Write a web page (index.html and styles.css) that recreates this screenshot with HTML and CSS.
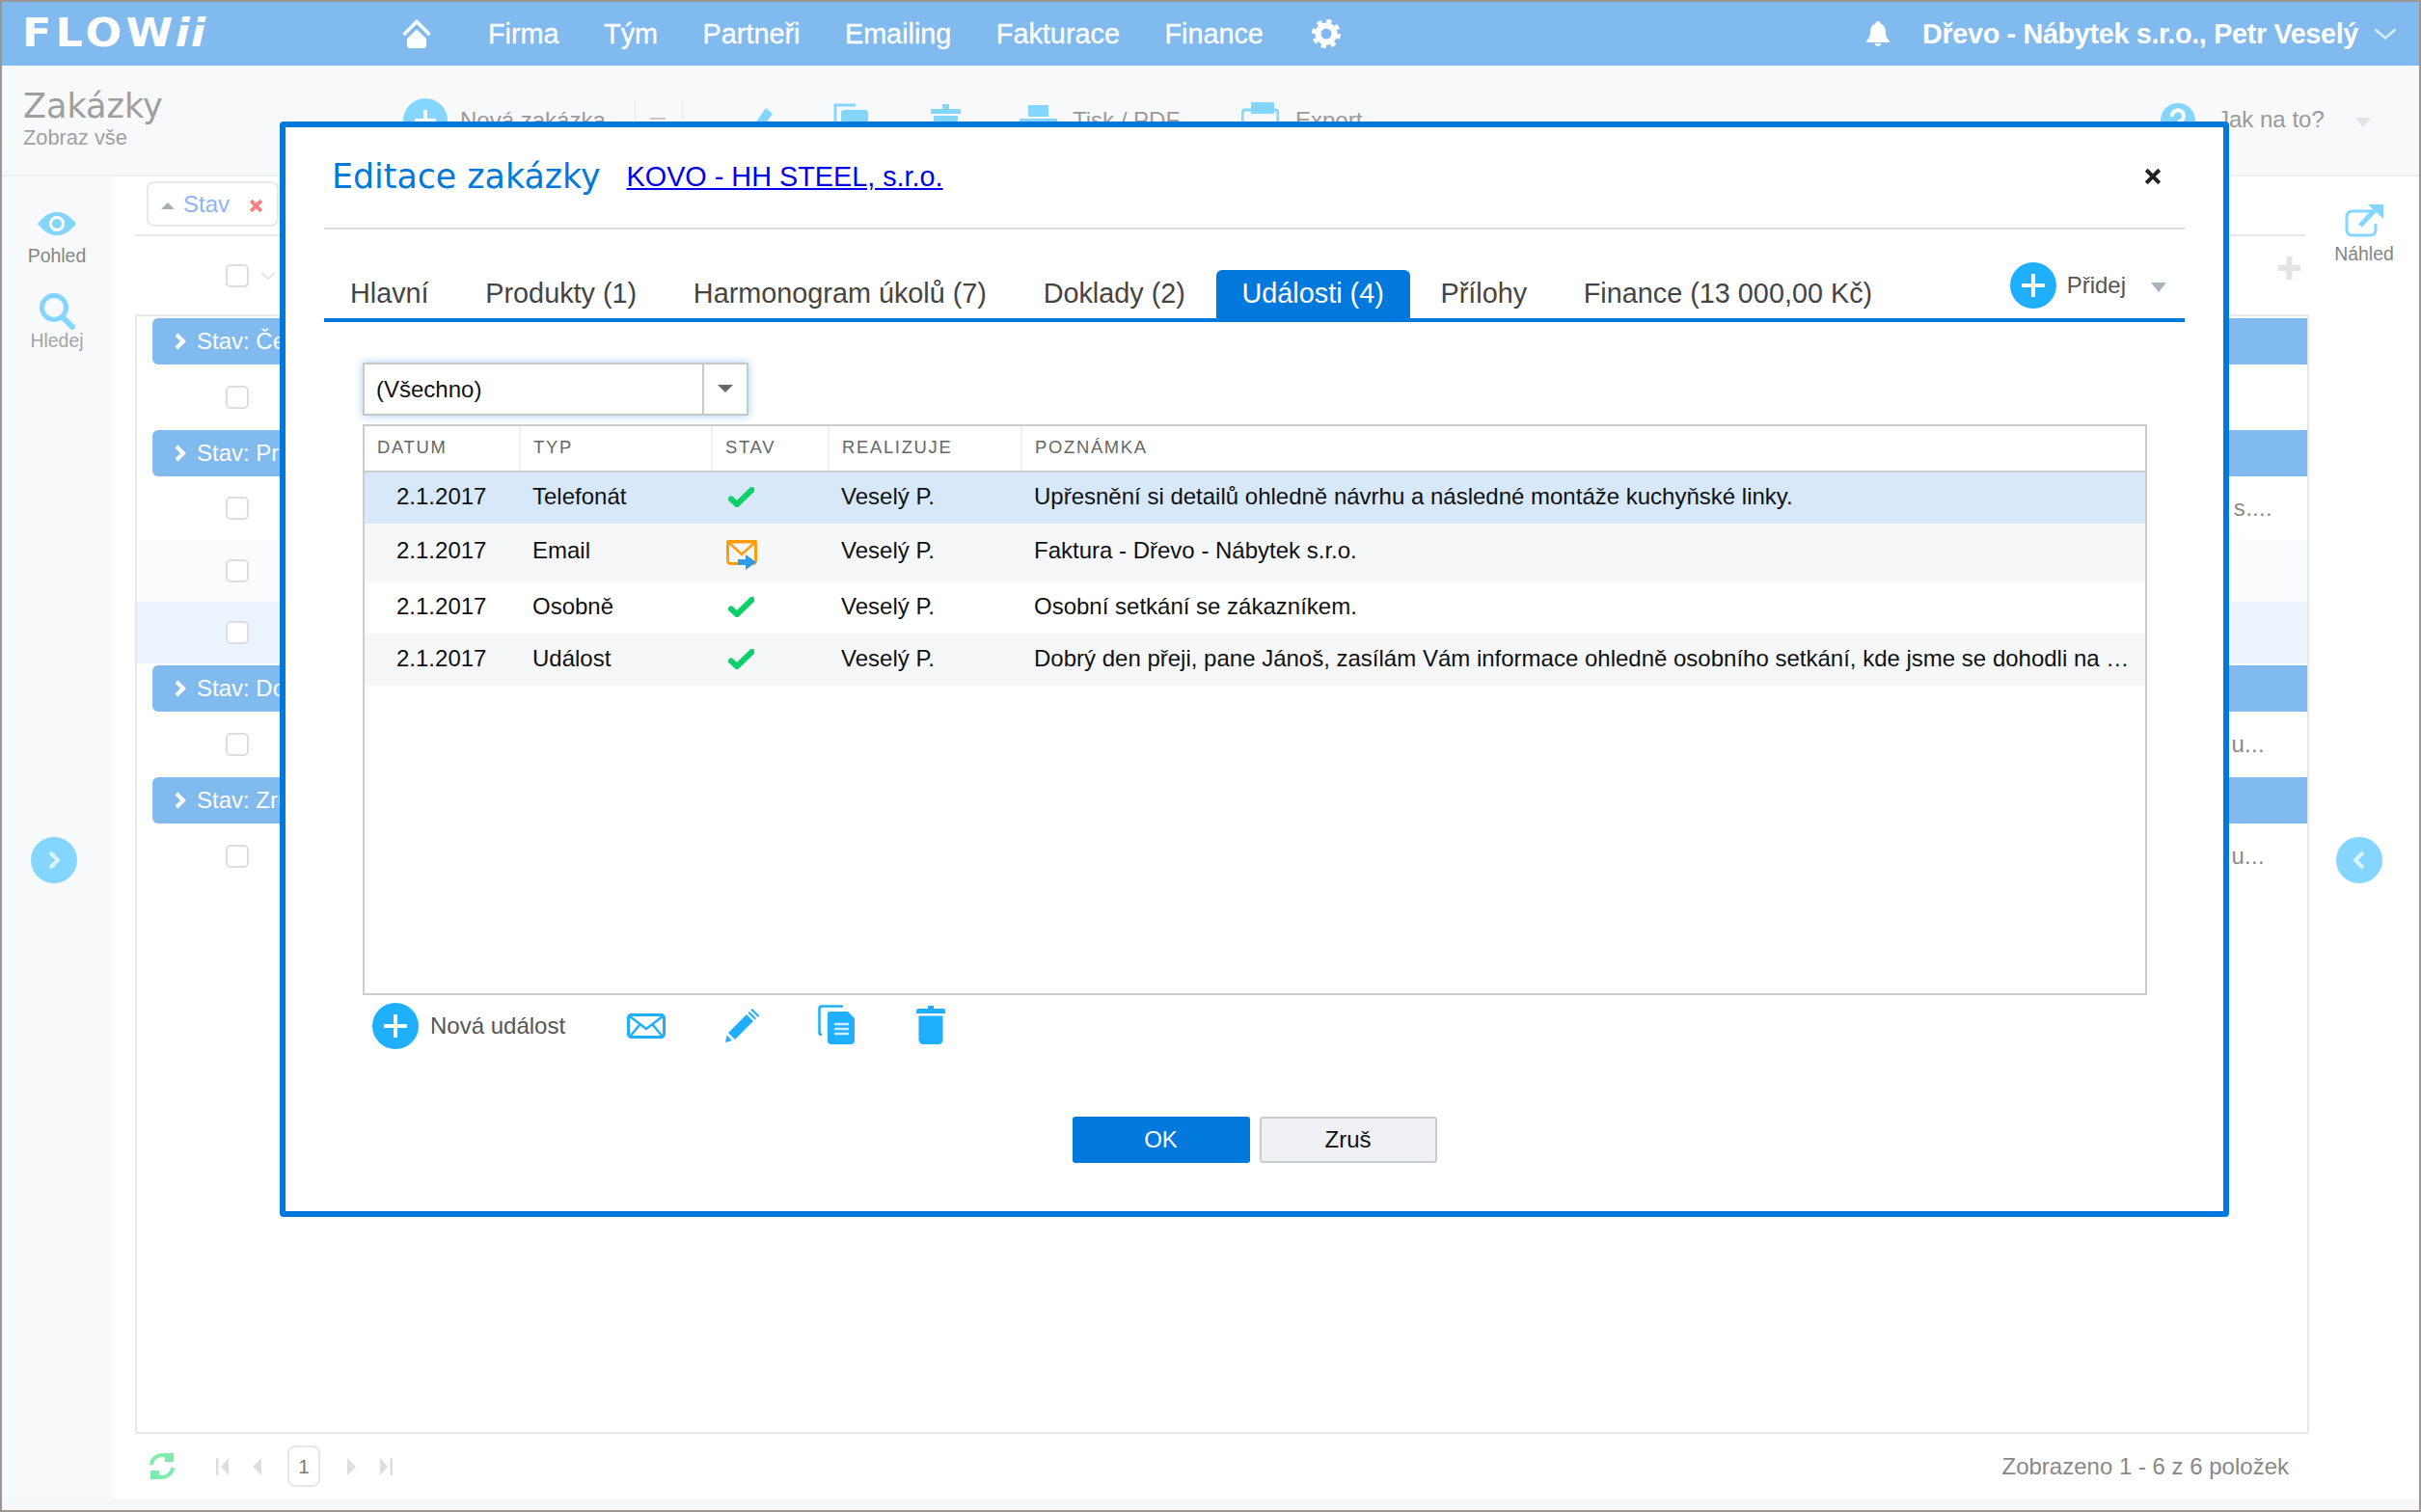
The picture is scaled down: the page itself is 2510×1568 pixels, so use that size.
FILE: index.html
```html
<!DOCTYPE html>
<html lang="cs">
<head>
<meta charset="utf-8">
<title>Zakázky</title>
<link rel="stylesheet" href="styles.css">
</head>
<body>
<div class="app">
  <header class="topbar">
    <div class="logo"><span class="logo-text">FLOW<span class="logo-ii">ii</span></span></div>
    <svg class="home" viewBox="0 0 30 30"><path d="M1.500 16 L15 2.500 L28.500 16" fill="none" stroke="#fff" stroke-width="3.500"/><path d="M15 10.500 L25 20 V27 Q25 30 22 30 H8 Q5 30 5 27 V20 Z" fill="#fff"/></svg>
    <nav class="nav">
      <span>Firma</span><span>Tým</span><span>Partneři</span><span>Emailing</span><span>Fakturace</span><span>Finance</span>
    </nav>
    <svg class="gear" viewBox="0 0 30 30"><circle cx="15" cy="15" r="8.500" fill="none" stroke="#fff" stroke-width="6"/><circle cx="15" cy="15" r="13" fill="none" stroke="#fff" stroke-width="4" stroke-dasharray="5.200 5"/></svg>
    <div class="user">
      <svg class="bell" viewBox="0 0 26 26"><path d="M13 0 a2.500 2.500 0 0 1 2.500 2.600 C20 4 21 8 21 12 c0 4 1.500 6 4 8.500 V22 H1 v-1.500 c2.500-2.500 4-4.500 4-8.500 0-4 1-8 5.500-9.400 A2.500 2.500 0 0 1 13 0 Z M10 23 h6 a3 3 0 0 1-6 0 Z" fill="#fff"/></svg>
      <span class="user-name">Dřevo - Nábytek s.r.o., Petr Veselý</span>
      <svg class="user-chev" viewBox="0 0 24 12"><path d="M1.500 1.500 L12 10.500 L22.500 1.500" fill="none" stroke="#d8ebfb" stroke-width="2.500"/></svg>
    </div>
  </header>

  <section class="subheader">
    <div class="page-title">
      <div class="page-name">Zakázky</div>
      <div class="page-sub">Zobraz vše</div>
    </div>
    <div class="tools">
      <svg class="tool-plus" viewBox="0 0 46 46"><circle cx="23" cy="23" r="23" fill="#84d6ff"/><path d="M23 12 V34 M12 23 H34" stroke="#fff" stroke-width="4"/></svg>
      <span class="tool-text tool-new">Nová zakázka</span>
      <i class="tool-sep sep-a"></i><i class="tool-dash"></i><i class="tool-sep sep-b"></i>
      <svg class="tool-ico ico-pen" viewBox="0 0 28 36"><path d="M20 2 L27 8 L11 30 L3 34 L4 25 Z" fill="#84d6ff"/></svg>
      <svg class="tool-ico ico-copy" viewBox="0 0 38 40"><path d="M3 30 V3 H24" fill="none" stroke="#84d6ff" stroke-width="3"/><rect x="9" y="8" width="28" height="32" rx="3" fill="#84d6ff"/></svg>
      <svg class="tool-ico ico-trash" viewBox="0 0 31 40"><path d="M0 6 H31 V11 H0 Z M12 1 H19 V6 H12 Z M3 13 H28 V40 H3 Z" fill="#84d6ff"/></svg>
      <svg class="tool-ico ico-print" viewBox="0 0 41 40"><path d="M10 2 H31 V14 H10 Z M1 16 H40 V36 H1 Z" fill="#84d6ff"/></svg>
      <span class="tool-text tool-pdf">Tisk / PDF</span>
      <svg class="tool-ico ico-xls" viewBox="0 0 39 40"><rect x="1" y="8" width="37" height="32" rx="3" fill="none" stroke="#84d6ff" stroke-width="3"/><rect x="10" y="0" width="24" height="12" fill="#84d6ff"/></svg>
      <span class="tool-text tool-export">Export</span>
      <svg class="tool-ico ico-help" viewBox="0 0 36 36"><circle cx="18" cy="18" r="18" fill="#84d6ff"/><path d="M12 14 A6 6 0 1 1 20 19 Q18 20 18 23" fill="none" stroke="#fff" stroke-width="4"/></svg>
      <span class="tool-text tool-howto">Jak na to?</span>
      <i class="tool-caret"></i>
    </div>
  </section>

  <div class="workspace">
    <aside class="lside">
      <svg class="eye" viewBox="0 0 40 24"><path d="M0 12 C8 2 14 0 20 0 S32 2 40 12 C32 22 26 24 20 24 S8 22 0 12 Z" fill="#84d6ff"/><circle cx="20" cy="12" r="8" fill="#fff"/><circle cx="20" cy="12" r="5" fill="#84d6ff"/></svg>
      <div class="side-label">Pohled</div>
      <svg class="search" viewBox="0 0 38 38"><circle cx="16" cy="15" r="12.500" fill="none" stroke="#84d6ff" stroke-width="5"/><path d="M25 25 L35 35" stroke="#84d6ff" stroke-width="6" stroke-linecap="round"/></svg>
      <div class="side-label side-label-light">Hledej</div>
      <div class="round-btn round-left"><svg viewBox="0 0 16 24"><path d="M4 4 L12 12 L4 20" fill="none" stroke="#d9f3ff" stroke-width="4"/></svg></div>
    </aside>

    <main class="main">
      <div class="chipbar">
        <div class="chip">
          <i class="chip-tri"></i><span class="chip-text">Stav</span>
          <svg class="chip-x" viewBox="0 0 14 14"><path d="M2 2 L12 12 M12 2 L2 12" stroke="#f98080" stroke-width="3.500"/></svg>
        </div>
      </div>
      <div class="grid-head">
        <i class="check"></i>
        <svg class="head-chev" viewBox="0 0 16 8"><path d="M1 1 L8 7 L15 1" fill="none" stroke="#e4e4e4" stroke-width="2"/></svg>
        <svg class="head-plus" viewBox="0 0 25 26"><path d="M12.500 1 V25 M1 13 H24" stroke="#e4e4e4" stroke-width="6"/></svg>
      </div>
      <div class="grid">
        <div class="group"><svg viewBox="0 0 14 20"><path d="M3 3 L10 10 L3 17" fill="none" stroke="#fff" stroke-width="4"/></svg>Stav: Čeká</div>
        <div class="row row-h68"><i class="check"></i></div>
        <div class="group"><svg viewBox="0 0 14 20"><path d="M3 3 L10 10 L3 17" fill="none" stroke="#fff" stroke-width="4"/></svg>Stav: Probíhá</div>
        <div class="row row-h65"><i class="check"></i><span class="row-note note-a">s....</span></div>
        <div class="row row-h65 row-alt"><i class="check"></i></div>
        <div class="row row-h64 row-sel"><i class="check"></i></div>
        <div class="group group-gap"><svg viewBox="0 0 14 20"><path d="M3 3 L10 10 L3 17" fill="none" stroke="#fff" stroke-width="4"/></svg>Stav: Dokončeno</div>
        <div class="row row-h68"><i class="check"></i><span class="row-note">u...</span></div>
        <div class="group"><svg viewBox="0 0 14 20"><path d="M3 3 L10 10 L3 17" fill="none" stroke="#fff" stroke-width="4"/></svg>Stav: Zrušeno</div>
        <div class="row row-h68"><i class="check"></i><span class="row-note">u...</span></div>
      </div>
      <footer class="pager">
        <svg class="refresh" viewBox="0 0 28 29"><path d="M3 13 A11 11 0 0 1 20 5" fill="none" stroke="#7debab" stroke-width="4"/><path d="M17 1 H26 V10 H17 Z" fill="#7debab"/><path d="M25 16 A11 11 0 0 1 8 24" fill="none" stroke="#7debab" stroke-width="4"/><path d="M2 19 H11 V28 H2 Z" fill="#7debab"/></svg>
        <svg class="pg pg-first" viewBox="0 0 13 18"><path d="M0 0 H2.500 V18 H0 Z M13 0 V18 L5 9 Z" fill="#dedede"/></svg>
        <svg class="pg pg-prev" viewBox="0 0 9 18"><path d="M9 0 V18 L0 9 Z" fill="#dedede"/></svg>
        <div class="pg-box">1</div>
        <svg class="pg pg-next" viewBox="0 0 9 18"><path d="M0 0 V18 L9 9 Z" fill="#dedede"/></svg>
        <svg class="pg pg-last" viewBox="0 0 13 18"><path d="M0 0 V18 L8 9 Z M10.500 0 H13 V18 H10.500 Z" fill="#dedede"/></svg>
        <span class="pg-info">Zobrazeno 1 - 6 z 6 položek</span>
      </footer>
    </main>

    <aside class="rside">
      <svg class="preview" viewBox="0 0 40 35"><path d="M28 8 H8 Q2 8 2 14 V27 Q2 33 8 33 H26 Q32 33 32 27 V21" fill="none" stroke="#84d6ff" stroke-width="3"/><path d="M16 23 L31 7" stroke="#84d6ff" stroke-width="5"/><path d="M24 1 H40 V16 Z" fill="#84d6ff"/></svg>
      <div class="side-label">Náhled</div>
      <div class="round-btn round-right"><svg viewBox="0 0 16 24"><path d="M12 4 L4 12 L12 20" fill="none" stroke="#d9f3ff" stroke-width="4"/></svg></div>
    </aside>
  </div>
  <div class="strip"></div>

  <div class="modal">
    <div class="modal-head">
      <h1 class="modal-title">Editace zakázky</h1>
      <a class="modal-link" href="#">KOVO - HH STEEL, s.r.o.</a>
      <svg class="modal-close" viewBox="0 0 16 16"><path d="M2 2 L14 14 M14 2 L2 14" stroke="#222" stroke-width="3.500"/></svg>
    </div>
    <div class="tabs">
      <span class="tab">Hlavní</span>
      <span class="tab">Produkty (1)</span>
      <span class="tab">Harmonogram úkolů (7)</span>
      <span class="tab">Doklady (2)</span>
      <span class="tab tab-active">Události (4)</span>
      <span class="tab">Přílohy</span>
      <span class="tab">Finance (13 000,00 Kč)</span>
      <div class="add">
        <svg class="plus-btn" viewBox="0 0 48 48"><circle cx="24" cy="24" r="24" fill="#20aeff"/><path d="M24 12 V36 M12 24 H36" stroke="#fff" stroke-width="4"/></svg>
        <span class="add-text">Přidej</span>
        <i class="add-caret"></i>
      </div>
    </div>
    <div class="modal-body">
      <div class="select"><span class="select-text">(Všechno)</span><span class="select-btn"><i></i></span></div>
      <div class="table-wrap">
        <table class="events">
          <colgroup><col class="c1"><col class="c2"><col class="c3"><col class="c4"><col></colgroup>
          <thead><tr><th>Datum</th><th>Typ</th><th>Stav</th><th>Realizuje</th><th>Poznámka</th></tr></thead>
          <tbody>
            <tr class="ev-sel"><td class="ev-date">2.1.2017</td><td>Telefonát</td><td class="ev-stat"><svg class="ok" viewBox="0 0 27 21"><path d="M3 12.500 L9 18 L24.500 3" fill="none" stroke="#0dd069" stroke-width="6" stroke-linecap="round"/></svg></td><td>Veselý P.</td><td class="ev-note">Upřesnění si detailů ohledně návrhu a následné montáže kuchyňské linky.</td></tr>
            <tr class="ev-tall ev-alt"><td class="ev-date">2.1.2017</td><td>Email</td><td class="ev-stat ev-stat-mail"><svg class="mailsend" viewBox="0 0 32 31"><rect x="1.500" y="1.500" width="29" height="23" rx="3" fill="none" stroke="#ff9d0f" stroke-width="3"/><rect x="0" y="0" width="32" height="3.500" rx="2" fill="#ff9d0f"/><path d="M3 3 L16 15 L29 3" fill="none" stroke="#ff9d0f" stroke-width="2.500"/><path d="M12 20 H20 V15 L31 23 L20 31 V26 H12 Z" fill="#2f9be8"/></svg></td><td>Veselý P.</td><td class="ev-note">Faktura - Dřevo - Nábytek s.r.o.</td></tr>
            <tr><td class="ev-date">2.1.2017</td><td>Osobně</td><td class="ev-stat"><svg class="ok" viewBox="0 0 27 21"><path d="M3 12.500 L9 18 L24.500 3" fill="none" stroke="#0dd069" stroke-width="6" stroke-linecap="round"/></svg></td><td>Veselý P.</td><td class="ev-note">Osobní setkání se zákazníkem.</td></tr>
            <tr class="ev-alt"><td class="ev-date">2.1.2017</td><td>Událost</td><td class="ev-stat"><svg class="ok" viewBox="0 0 27 21"><path d="M3 12.500 L9 18 L24.500 3" fill="none" stroke="#0dd069" stroke-width="6" stroke-linecap="round"/></svg></td><td>Veselý P.</td><td class="ev-note">Dobrý den přeji, pane Jánoš, zasílám Vám informace ohledně osobního setkání, kde jsme se dohodli na další spolupráci a termínech.</td></tr>
          </tbody>
        </table>
      </div>
      <div class="ev-tools">
        <svg class="plus-btn" viewBox="0 0 48 48"><circle cx="24" cy="24" r="24" fill="#20aeff"/><path d="M24 12 V36 M12 24 H36" stroke="#fff" stroke-width="4"/></svg>
        <span class="ev-new">Nová událost</span>
        <svg class="et et-mail" viewBox="0 0 40 26"><rect x="1.500" y="1.500" width="37" height="23" rx="3" fill="none" stroke="#20aeff" stroke-width="3"/><path d="M3 3 L20 16 L37 3 M3 24 L13 12 M37 24 L27 12" fill="none" stroke="#20aeff" stroke-width="2.500"/></svg>
        <svg class="et et-pen" viewBox="0 0 37 36"><path d="M27 3 L34 10 L32.500 11.500 L25.500 4.500 Z M24 6 L31 13 L12 32 L5 25 Z" fill="#20aeff"/><path d="M3.500 27.500 L9 33 L2 35 Z" fill="#20aeff"/><path d="M29 0.500 L36.500 8" stroke="#20aeff" stroke-width="2"/></svg>
        <svg class="et et-copy" viewBox="0 0 38 41"><path d="M26 1.500 H4 Q1.500 1.500 1.500 4 V29 Q1.500 31 4 31" fill="none" stroke="#20aeff" stroke-width="2.500"/><path d="M12 7 H31 L38 14 V37 Q38 41 34 41 H14 Q10 41 10 37 V9 Q10 7 12 7 Z" fill="#20aeff"/><path d="M17 20 H32 M17 25 H32 M17 30 H32" stroke="#cdeeff" stroke-width="2.500"/></svg>
        <svg class="et et-trash" viewBox="0 0 30 40"><path d="M12 0 H18 V3 H28 Q30 3 30 5 V8 H0 V5 Q0 3 2 3 H12 Z M2.500 10.500 H27.500 V35 Q27.500 40 22.500 40 H7.500 Q2.500 40 2.500 35 Z" fill="#20aeff"/></svg>
      </div>
      <div class="actions">
        <button class="btn btn-ok">OK</button>
        <button class="btn btn-cancel">Zruš</button>
      </div>
    </div>
  </div>
</div>
</body>
</html>
```

FILE: styles.css
```css
* { box-sizing: border-box; }
html, body { margin: 0; padding: 0; }
body { font-family: "Liberation Sans", Arial, sans-serif; background: #fff; }
i { display: block; }

.app {
  position: relative;
  width: 2510px;
  height: 1568px;
  border: 2px solid #9b9594;
  display: flex;
  flex-direction: column;
  overflow: hidden;
  background: #fff;
}

/* top bar */
.topbar {
  height: 66px;
  flex: none;
  background: #80baee;
  display: flex;
  align-items: center;
  color: #fff;
  font-size: 28.8px;
}
.logo {
  margin-left: 21px;
  margin-top: -3px;
  width: 394px;
  flex: none;
  font-family: "DejaVu Sans", sans-serif;
  font-size: 41px;
  font-weight: 700;
  letter-spacing: 4px;
  color: #fff;
  white-space: nowrap;
}
.logo-text { display: inline-block; transform: scaleX(1.08); transform-origin: left center; }
.logo-ii { font-style: italic; letter-spacing: 1px; margin-left: -2px; }
.home { width: 30px; height: 30px; flex: none; }
.nav { display: flex; gap: 46.500px; margin-left: 59px; -webkit-text-stroke: .3px #fff; }
.gear { width: 30px; height: 30px; margin-left: 50px; flex: none; }
.user { margin-left: auto; display: flex; align-items: center; padding-right: 23px; }
.bell { width: 26px; height: 26px; }
.user-name { font-weight: 700; font-size: 28.8px; margin-left: 33px; letter-spacing: -.35px; }
.user-chev { width: 24px; height: 12px; margin-left: 16px; }

/* sub header */
.subheader {
  height: 115px;
  flex: none;
  background: #f8f9fb;
  border-bottom: 2px solid #eef0f2;
  display: flex;
  color: #a0a0a0;
}
.page-title { width: 416px; flex: none; padding: 21px 0 0 22px; }
.page-name { font-family: "DejaVu Sans", sans-serif; font-size: 35px; line-height: 42px; color: #9e9e9e; }
.page-sub { font-size: 21.800px; line-height: 30px; margin-top: -3px; }
.tools { position: relative; flex: 1; display: flex; align-items: flex-start; padding-top: 34px; }
.tool-plus { width: 46px; height: 46px; flex: none; }
.tool-text { font-size: 24px; color: #9a9a9a; line-height: 28px; }
.tool-new { margin: 9px 0 0 13px; width: 150px; white-space: nowrap; flex: none; }
.tool-sep { width: 1px; height: 30px; background: #e8e8e8; flex: none; }
.sep-a { margin-left: 31px; }
.sep-b { margin-left: 0; }
.tool-dash { width: 16px; height: 2px; background: #c8c8c8; margin: 20px 17px 0 15px; flex: none; }
.tool-ico { flex: none; }
.ico-pen { width: 28px; height: 36px; margin: 8px 0 0 66px; }
.ico-copy { width: 38px; height: 40px; margin: 4px 0 0 61px; }
.ico-trash { width: 31px; height: 40px; margin: 5px 0 0 64px; }
.ico-print { width: 41px; height: 40px; margin: 5px 0 0 60px; }
.tool-pdf { margin: 9px 0 0 15px; width: 112px; white-space: nowrap; flex: none; }
.ico-xls { width: 39px; height: 40px; margin: 4px 0 0 63px; }
.tool-export { margin: 9px 0 0 17px; width: 70px; flex: none; }
.ico-help { width: 36px; height: 36px; margin: 5px 0 0 auto; }
.tool-howto { margin: 8px 0 0 23px; width: 109px; white-space: nowrap; flex: none; }
.tool-caret {
  width: 0; height: 0; flex: none;
  margin: 20px 50px 0 34px;
  border-left: 8px solid transparent;
  border-right: 8px solid transparent;
  border-top: 10px solid #dfe2e6;
}

/* workspace */
.workspace { flex: 1; display: flex; min-height: 0; }
.lside {
  width: 114px;
  flex: none;
  background: #f8f9fb;
  display: flex;
  flex-direction: column;
  align-items: center;
  padding-top: 37px;
}
.eye { width: 40px; height: 24px; display: block; }
.side-label { font-size: 19.400px; line-height: 24px; color: #858585; margin-top: 9px; }
.side-label-light { color: #a5a5a5; margin-top: -1px; }
.search { width: 38px; height: 38px; margin-top: 27px; display: block; }
.round-btn {
  width: 48px; height: 48px;
  border-radius: 50%;
  background: #84d6ff;
  display: flex;
  align-items: center;
  justify-content: center;
}
.round-btn svg { width: 16px; height: 24px; }
.round-left { margin-top: auto; margin-bottom: 638px; margin-right: 6px; }
.round-right { margin-top: auto; margin-bottom: 638px; margin-right: 10px; }

.main { flex: 1; min-width: 0; padding-left: 24px; display: flex; flex-direction: column; }
.chipbar { height: 62px; flex: none; padding: 5px 4px 0 0; margin-right: 4px; border-bottom: 2px solid #e8e8e8; padding-left: 12px; }
.chip {
  width: 137px; height: 47px;
  border: 2px solid #e8e8e8;
  border-radius: 8px;
  display: flex;
  align-items: center;
  padding-left: 13px;
  background: #fff;
}
.chip-tri { width: 0; height: 0; border-left: 7px solid transparent; border-right: 7px solid transparent; border-bottom: 7px solid #a8b0b0; margin-top: 3px; }
.chip-text { font-size: 24px; color: #8db3f0; margin-left: 9px; }
.chip-x { width: 15px; height: 15px; margin-left: 20px; margin-top: 3px; }

.check {
  width: 24px; height: 24px;
  flex: none;
  border: 2px solid #dedede;
  border-radius: 5px;
  background: #fff;
}
.grid-head { height: 81px; flex: none; display: flex; align-items: center; padding-left: 94px; }
.head-chev { width: 16px; height: 8px; margin-left: 12px; }
.head-plus { width: 25px; height: 26px; margin-left: auto; margin-right: 8px; margin-top: -16px; }
.grid { flex: 1; min-height: 0; border: 2px solid #e8e8e8; padding-top: 2px; border-radius: 2px; }
.group {
  height: 48px;
  margin-left: 16px;
  background: #80baee;
  border-radius: 6px 0 0 6px;
  display: flex;
  align-items: center;
  padding-left: 22px;
  color: #fff;
  font-size: 24px;
  font-weight: 400;
}
.group svg { width: 14px; height: 20px; margin-right: 10px; }
.group-gap { margin-top: 2px; }
.row { display: flex; align-items: center; padding-left: 92px; }
.row-h68 { height: 68px; }
.row-h65 { height: 65px; }
.row-h64 { height: 64px; }
.row-alt { background: #fbfcfd; }
.row-sel { background: #ebf3fc; }
.row-note { margin-left: auto; margin-right: 44px; font-size: 24px; color: #8a8a8a; letter-spacing: .3px; }
.note-a { margin-right: 36px; }

.pager { height: 67px; flex: none; display: flex; align-items: center; padding-left: 14px; }
.refresh { width: 28px; height: 29px; }
.pg { height: 18px; flex: none; }
.pg-first { width: 13px; margin-left: 42px; }
.pg-prev { width: 9px; margin-left: 25px; }
.pg-box {
  width: 34px; height: 43px;
  margin-left: 27px;
  border: 2px solid #e6e6e6;
  border-radius: 8px;
  display: flex;
  align-items: center;
  justify-content: center;
  font-size: 20.800px;
  color: #777;
  background: #fff;
}
.pg-next { width: 9px; margin-left: 28px; }
.pg-last { width: 13px; margin-left: 25px; }
.pg-info { margin-left: auto; margin-right: 21px; font-size: 24px; color: #888; }

.rside { width: 114px; flex: none; display: flex; flex-direction: column; align-items: center; padding-top: 28px; background: #fff; }
.preview { width: 40px; height: 35px; display: block; }
.rside .side-label { margin-top: 5px; }

.strip { height: 12px; flex: none; background: #f6f7f9; }

/* modal */
.modal {
  position: absolute;
  left: 288px;
  top: 124px;
  width: 2021px;
  height: 1136px;
  border: 6px solid #0078dc;
  border-radius: 4px;
  background: #fff;
  padding: 0 40px;
}
.modal-head {
  height: 106px;
  border-bottom: 2px solid #dcdcdc;
  display: flex;
  align-items: center;
  padding-left: 8px;
  padding-bottom: 2px;
}
.modal-title { margin: 0; font-family: "DejaVu Sans", sans-serif; font-size: 34.800px; font-weight: 400; color: #0078dc; }
.modal-link { margin-left: 27px; font-size: 28.800px; color: #0000ee; text-decoration: underline; }
.modal-close { width: 18px; height: 18px; margin-left: auto; margin-right: 24px; }
.tabs {
  height: 96px;
  border-bottom: 4px solid #0078dc;
  display: flex;
  align-items: flex-end;
  gap: 4.700px;
}
.tab {
  height: 50px;
  padding: 0 27px;
  display: flex;
  align-items: center;
  padding-bottom: 1px;
  font-size: 28.800px;
  color: #444;
  white-space: nowrap;
}
.tab-active { background: #0078dc; color: #fff; border-radius: 6px 6px 0 0; }
.add { margin-left: auto; display: flex; align-items: center; padding-right: 19px; margin-bottom: 10px; }
.plus-btn { width: 48px; height: 48px; flex: none; display: block; }
.add-text { font-size: 24px; color: #555; margin-left: 11px; }
.add-caret {
  width: 0; height: 0;
  margin-left: 26px; margin-top: 4px;
  border-left: 8px solid transparent;
  border-right: 8px solid transparent;
  border-top: 10px solid #aab4bc;
}

.modal-body { padding: 42px 40px 0; }
.select {
  width: 400px; height: 55px;
  border: 2px solid #c8c8c8;
  box-shadow: 0 0 9px rgba(90, 165, 240, .55);
  display: flex;
  font-size: 24px;
  color: #111;
}
.select-text { flex: 1; display: flex; align-items: center; padding-left: 12px; }
.select-btn { width: 46px; border-left: 2px solid #c8c8c8; display: flex; align-items: center; justify-content: center; padding-bottom: 2px; }
.select-btn i { width: 0; height: 0; border-left: 8px solid transparent; border-right: 8px solid transparent; border-top: 8px solid #666; }

.table-wrap { margin-top: 9px; width: 1850px; height: 592px; border: 2px solid #cccccc; }
.events { width: 100%; table-layout: fixed; border-collapse: collapse; font-size: 24px; color: #111; }
.c1 { width: 161px; }
.c2 { width: 199px; }
.c3 { width: 121px; }
.c4 { width: 200px; }
.events th {
  height: 47px;
  text-align: left;
  padding: 0 0 2px 13px;
  font-size: 18.400px;
  font-weight: 400;
  letter-spacing: 1.700px;
  text-transform: uppercase;
  color: #666;
  border-bottom: 2px solid #ccc;
  border-left: 2px solid #f0f0f0;
}
.events th:first-child { border-left: 0; }
.events td {
  height: 54px;
  padding: 0 8px 3px 13px;
  white-space: nowrap;
  overflow: hidden;
  text-overflow: ellipsis;
}
.events .ev-tall td { height: 60px; padding-bottom: 5px; }
.events .ev-date { padding-left: 33px; }
.events .ev-stat { padding-left: 17px; padding-bottom: 2px; }
.events .ev-tall .ev-stat-mail { padding-left: 15px; padding-top: 4px; padding-bottom: 0; }
.ev-sel { background: #d6e8f9; }
.ev-alt { background: #f6f7f9; }
.ok { width: 27px; height: 21px; display: block; }
.mailsend { width: 32px; height: 31px; display: block; }

.ev-tools { display: flex; align-items: center; margin-top: 8px; padding-left: 10px; }
.ev-new { font-size: 24px; color: #555; margin-left: 12px; width: 140px; white-space: nowrap; flex: none; }
.et { flex: none; display: block; }
.et-mail { width: 40px; height: 26px; margin-left: 64px; }
.et-pen { width: 37px; height: 36px; margin-left: 60px; }
.et-copy { width: 38px; height: 41px; margin-left: 61px; margin-top: -3px; }
.et-trash { width: 30px; height: 40px; margin-left: 64px; margin-top: -3px; }

.actions { display: flex; justify-content: center; gap: 10px; margin-top: 70px; }
.btn {
  width: 184px; height: 48px;
  border-radius: 3px;
  font-family: inherit;
  font-size: 24px;
  padding: 0;
}
.btn-ok { background: #0078dc; color: #fff; border: 0; }
.btn-cancel { background: #f0f1f5; color: #111; border: 2px solid #ccc; }
```
